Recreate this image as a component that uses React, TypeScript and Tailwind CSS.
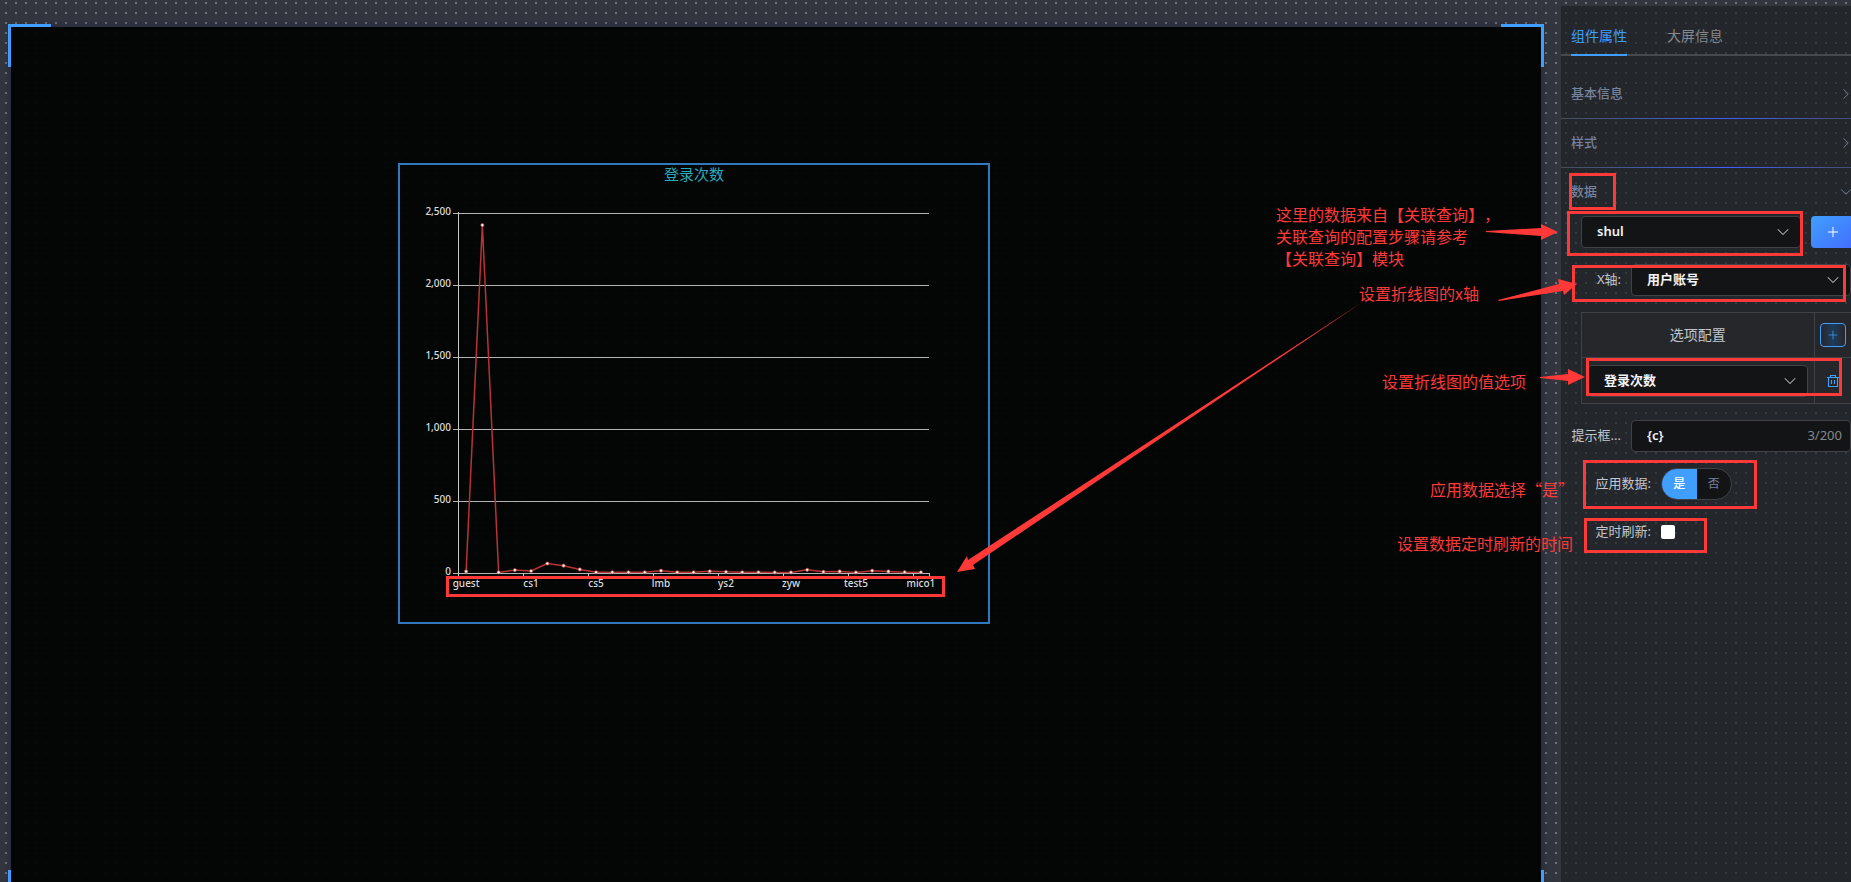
import React, { useState } from 'react';
import { ChevronDown, ChevronRight, Plus } from 'lucide-react';

const LOGIN_COUNTS = [
  11, 2416, 4, 20, 14, 66, 51, 25, 5, 5, 5, 5, 16, 5, 5, 12, 8, 5, 5, 4, 4, 22, 8, 11, 4, 16, 11, 6, 5,
];
const USERS = ['guest', 'cs1', 'cs5', 'lmb', 'ys2', 'zyw', 'test5', 'mico1'];
const Y_TICKS = [2500, 2000, 1500, 1000, 500, 0];

// Plot area inside the widget
const LEFT = 58;
const RIGHT = 529;
const TOP = 48;
const BOTTOM = 408;

const toX = (i: number) => LEFT + ((RIGHT - LEFT) / LOGIN_COUNTS.length) * (i + 0.5);
const toY = (v: number) => BOTTOM - ((BOTTOM - TOP) * v) / 2500;

const LineChart: React.FC = () => {
  const step = (RIGHT - LEFT) / LOGIN_COUNTS.length;

  return (
    <svg viewBox="0 0 588 457" className="block w-full" role="img" aria-label="登录次数">
      {Y_TICKS.map((v) => (
        <g key={v}>
          <line x1={LEFT - 5} x2={RIGHT} y1={toY(v) + 0.5} y2={toY(v) + 0.5} stroke="#b4b4b4" />
          <text x={LEFT - 7} y={toY(v) + 2} textAnchor="end" fontSize="10" fontWeight="500" fill="#dcdcdc">
            {v.toLocaleString('en-US')}
          </text>
        </g>
      ))}
      <line x1={LEFT + 0.5} x2={LEFT + 0.5} y1={TOP - 1} y2={BOTTOM + 3} stroke="#c8c8c8" />
      {USERS.map((name, i) => (
        <g key={name}>
          <line
            x1={Math.round(LEFT + step * i * 4) + 0.5}
            x2={Math.round(LEFT + step * i * 4) + 0.5}
            y1={BOTTOM}
            y2={BOTTOM + 3}
            stroke="#c8c8c8"
          />
          <text
            x={toX(i * 4)}
            y={BOTTOM + 14}
            textAnchor="middle"
            fontSize="10"
            fontWeight="500"
            fill="#dcdcdc"
          >
            {name}
          </text>
        </g>
      ))}
      <line x1={RIGHT + 0.5} x2={RIGHT + 0.5} y1={BOTTOM} y2={BOTTOM + 3} stroke="#c8c8c8" />
      <polyline
        points={LOGIN_COUNTS.map((v, i) => `${toX(i)},${toY(v)}`).join(' ')}
        fill="none"
        stroke="#b83432"
        strokeWidth="1.5"
        strokeLinejoin="bevel"
      />
      {LOGIN_COUNTS.map((v, i) => (
        <circle key={i} cx={toX(i)} cy={toY(v)} r="1.6" fill="#fff" stroke="#c23531" strokeWidth="0.7" />
      ))}
    </svg>
  );
};

interface SelectBoxProps {
  id: string;
  label?: string;
  options: string[];
  className?: string;
}

const SelectBox: React.FC<SelectBoxProps> = ({ id, label, options, className = '' }) => (
  <div className={`relative ${className}`}>
    <select
      id={id}
      aria-label={label}
      className="block h-8 w-full appearance-none rounded border border-[#404247] bg-[#131416] pl-[15px] pr-8 text-[13px] font-semibold text-gray-100 outline-none"
    >
      {options.map((o) => (
        <option key={o}>{o}</option>
      ))}
    </select>
    <ChevronDown
      className="pointer-events-none absolute right-2 top-[6px] h-5 w-5 text-[#b4b7bd]"
      strokeWidth={1.25}
    />
  </div>
);

const Divider: React.FC = () => (
  <div className="h-px bg-linear-to-r from-[#474b55] via-[#4160ff] via-57% to-[#474b75]" />
);

interface SectionProps {
  title: string;
  open?: boolean;
}

const SectionHeader: React.FC<SectionProps> = ({ title, open }) => (
  <button className="flex h-12 w-full items-center justify-between pl-[10px] text-[13px] font-medium text-[#75829f]">
    <span>{title}</span>
    {open ? (
      <ChevronDown className="-mr-1 h-[18px] w-[18px]" strokeWidth={1.25} />
    ) : (
      <ChevronRight className="-mr-1 h-[18px] w-[18px]" strokeWidth={1.25} />
    )}
  </button>
);

const TrashIcon: React.FC = () => (
  <svg viewBox="0 0 14 14" className="h-[14px] w-[14px]" fill="none" stroke="currentColor" strokeWidth="1.1">
    <path d="M1 3.5h12M4.5 3.5v-2h5v2M2.5 3.5v9h9v-9M5.5 6v4M8.5 6v4" />
  </svg>
);

const PropertyPanel: React.FC = () => {
  const [applyData, setApplyData] = useState(true);

  return (
    <aside className="mt-[6px] w-[290px] shrink-0 overflow-hidden bg-[#1c1f22]/68 text-[13px] text-[#c3c6cc]">
      <nav className="flex h-[50px] gap-10 border-b-2 border-[#47494d] pl-[10px] text-sm">
        <button className="-mb-[2px] border-b-2 border-[#409eff] pt-3 text-[#409eff]">组件属性</button>
        <button className="-mb-[2px] border-b-2 border-transparent pt-3 text-[#85888c]">大屏信息</button>
      </nav>

      <div className="pt-[14px]">
        <SectionHeader title="基本信息" />
        <Divider />
        <SectionHeader title="样式" />
        <Divider />
        <SectionHeader title="数据" open />
      </div>

      <form className="flex flex-col gap-4">
        <div className="flex gap-[10px] pl-5">
          <SelectBox id="query" label="数据" options={['shul']} className="w-[220px] shrink-0" />
          <button
            type="button"
            aria-label="+"
            className="flex h-8 w-11 shrink-0 items-center justify-center rounded bg-linear-to-br from-[#409eff] to-[#446cff] text-white"
          >
            <Plus className="h-4 w-4" strokeWidth={1.5} />
          </button>
        </div>

        <div className="flex items-center gap-[10px]">
          <label htmlFor="x-axis" className="w-[60px] text-right">
            X轴:
          </label>
          <SelectBox id="x-axis" options={['用户账号']} className="flex-1" />
        </div>

        <div className="pl-5">
          <table className="w-full border-collapse bg-[#25272b]">
            <thead>
              <tr className="h-[45px]">
                <th className="border border-[#404247] text-sm font-normal">选项配置</th>
                <th className="w-[37px] border border-r-0 border-[#404247] p-0">
                  <button
                    type="button"
                    aria-label="+"
                    className="mx-auto flex h-6 w-[26px] items-center justify-center rounded-sm border border-[#409eff] bg-linear-to-r from-[#25272b] via-[#1e3b5a] to-[#25272b] text-[#409eff]"
                  >
                    <Plus className="h-[14px] w-[14px]" strokeWidth={1.25} />
                  </button>
                </th>
              </tr>
            </thead>
            <tbody>
              <tr className="h-[46px]">
                <td className="border border-[#404247] px-[6px] py-0">
                  <SelectBox id="value-option" label="选项配置" options={['登录次数']} />
                </td>
                <td className="border border-r-0 border-[#404247] p-0 text-[#409eff]">
                  <button type="button" aria-label="删除" className="mx-auto block">
                    <TrashIcon />
                  </button>
                </td>
              </tr>
            </tbody>
          </table>
        </div>

        <div className="flex items-center gap-[10px]">
          <label htmlFor="tooltip" className="w-[60px] text-right">
            提示框...
          </label>
          <div className="flex h-8 flex-1 items-center rounded border border-[#404247] bg-[#131416] pl-[15px] pr-2">
            <input
              id="tooltip"
              defaultValue="{c}"
              className="w-0 flex-1 bg-transparent text-[13px] font-semibold text-gray-100 outline-none"
            />
            <span className="text-[#85888e]">3/200</span>
          </div>
        </div>

        <div className="flex items-center gap-[10px]">
          <span className="w-[90px] text-right">应用数据:</span>
          <div className="flex h-8 w-[71px] overflow-hidden rounded-full border border-[#404247] bg-[#131416] text-xs">
            <button
              type="button"
              onClick={() => setApplyData(true)}
              className={applyData ? 'flex-1 bg-[#409eff] font-medium text-white' : 'flex-1 text-[#75829f]'}
            >
              是
            </button>
            <button
              type="button"
              onClick={() => setApplyData(false)}
              className={applyData ? 'flex-1 text-[#75829f]' : 'flex-1 bg-[#409eff] font-medium text-white'}
            >
              否
            </button>
          </div>
        </div>

        <div className="flex h-8 items-center gap-[10px]">
          <label htmlFor="refresh" className="w-[90px] text-right">
            定时刷新:
          </label>
          <input id="refresh" type="checkbox" className="h-[14px] w-[14px] appearance-none rounded-xs bg-white" />
        </div>
      </form>
    </aside>
  );
};

// Red boxes, arrows and notes laid over the editor
const Annotations: React.FC = () => (
  <div className="pointer-events-none absolute right-0 top-0 h-[882px] w-[1851px] font-['Noto_Sans_CJK_SC',sans-serif] text-base/[22px] whitespace-nowrap text-[#ff3838] [text-spacing-trim:space-all]">
    <svg viewBox="0 0 1851 882" className="absolute inset-0 h-full w-full">
      <g fill="none" stroke="#ff3838" strokeWidth="3">
        <rect x="447.5" y="577.5" width="496" height="18" />
        <rect x="1570.5" y="174.5" width="44" height="34" />
        <rect x="1568.5" y="212.5" width="233" height="42" />
        <rect x="1573.5" y="266.5" width="271" height="34" />
        <rect x="1587.5" y="359.5" width="253" height="35" />
        <rect x="1584.5" y="461.5" width="171" height="46" />
        <rect x="1585.5" y="519.5" width="120" height="32" />
      </g>
      <g fill="#ff3838">
        <path d="M1486 231l55-3v-4l17 8-17 8v-4l-55-4z" />
        <path d="M1498 300l61-16-1-5 19 5-13 11-1-4-64 10z" />
        <path d="M1540 377l28-3v-5l17 8-17 8v-4l-28-3z" />
        <path d="M1364 301L968 560l-1-4-10 16 18-3-2-4z" />
      </g>
    </svg>
    <p className="absolute left-[1276px] top-[203px]">
      这里的数据来自【关联查询】，
      <br />
      关联查询的配置步骤请参考
      <br />
      【关联查询】模块
    </p>
    <p className="absolute left-[1359px] top-[282px]">设置折线图的x轴</p>
    <p className="absolute left-[1382px] top-[370px]">设置折线图的值选项</p>
    <p className="absolute left-[1430px] top-[478px]">应用数据选择“是”</p>
    <p className="absolute left-[1397px] top-[532px]">设置数据定时刷新的时间</p>
  </div>
);

const App: React.FC = () => {
  return (
    <div className="relative h-screen overflow-hidden bg-[#33363e] font-['Noto_Sans','Noto_Sans_CJK_SC',sans-serif]">
      <svg className="absolute inset-0 h-full w-full">
        <pattern id="dots" width="10" height="10" patternUnits="userSpaceOnUse">
          <rect x="5" y="2" width="2" height="2" fill="#6f7278" />
        </pattern>
        <rect width="100%" height="100%" fill="url(#dots)" />
      </svg>

      <div className="relative flex h-full w-full">
        <main className="flex flex-1 pl-2 pr-[17px] pt-6">
          <div className="relative -mb-[31px] flex-1 p-[3px]">
            <div className="relative h-full bg-[#020403]/95 shadow-[0_0_10px_rgba(20,28,60,0.5)]">
              <section className="absolute left-[387px] top-[136px] w-[592px] border-2 border-[#3178bf]">
                <h2 className="absolute inset-x-0 top-0 text-center text-[15px]/[18px] text-[#27a9bb]">登录次数</h2>
                <LineChart />
              </section>
            </div>
            <span className="absolute left-0 top-0 h-[43px] w-[43px] border-l-3 border-t-3 border-[#409eff]" />
            <span className="absolute right-0 top-0 h-[43px] w-[43px] border-r-3 border-t-3 border-[#409eff]" />
            <span className="absolute bottom-0 left-0 h-[43px] w-[43px] border-b-3 border-l-3 border-[#409eff]" />
            <span className="absolute bottom-0 right-0 h-[43px] w-[43px] border-b-3 border-r-3 border-[#409eff]" />
          </div>
        </main>
        <PropertyPanel />
      </div>

      <Annotations />
    </div>
  );
};

export default App;
